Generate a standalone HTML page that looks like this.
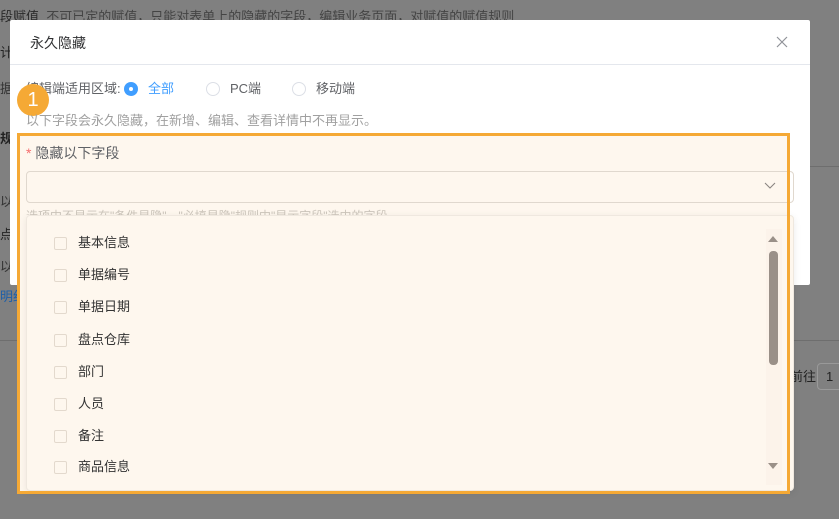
<!DOCTYPE html>
<html><head><meta charset="utf-8"><style>
*{margin:0;padding:0;box-sizing:border-box}
body{width:839px;height:519px;overflow:hidden;background:#808080;position:relative;font-family:"Liberation Sans","Noto Sans CJK SC",sans-serif;font-size:13px;color:#333;line-height:18px}
.a{position:absolute;white-space:nowrap}
.cb{position:absolute;left:0;width:13px;height:13px;border:1px solid #e3d9cd;border-radius:2px}
.lb{position:absolute;left:24px;line-height:18px}
</style></head><body>
<div class="a" style="left:0;top:8px;font-size:13px;color:#2a2a2a;">段赋值&nbsp;&nbsp;<span style="color:#444">不可已定的赋值，只能对表单上的隐藏的字段，编辑业务页面，对赋值的赋值规则</span></div>
<div class="a" style="left:0;top:44px;color:#222">计</div>
<div class="a" style="left:0;top:80px;color:#333">据</div>
<div class="a" style="left:0;top:130px;color:#222;font-weight:bold">规</div>
<div class="a" style="left:0;top:193px;color:#333">以</div>
<div class="a" style="left:0;top:226px;color:#222">点</div>
<div class="a" style="left:0;top:258px;color:#333">以</div>
<div class="a" style="left:0;top:288px;color:#1f5fa8">明细</div>
<div class="a" style="left:0;top:340px;width:839px;height:1px;background:#6e6e6e"></div>
<div class="a" style="left:810px;top:166px;width:29px;height:1px;background:#6e6e6e"></div>
<div class="a" style="left:790px;top:368px;color:#222">前往</div>
<div class="a" style="left:817px;top:363px;width:30px;height:27px;border:1px solid #999;border-radius:4px;background:#808080;color:#222;padding:4px 0 0 8px">1</div>

<div class="a" style="left:10px;top:20px;width:800px;height:265px;background:#fff;border-radius:2px"></div>
<div class="a" style="left:10px;top:64px;width:800px;height:1px;background:#e4e7ed"></div>
<div class="a" style="left:30px;top:34px;font-size:14px;color:#303133">永久隐藏</div>
<svg class="a" style="left:776px;top:36px" width="12" height="12"><path d="M1 1L11 11M11 1L1 11" stroke="#909399" stroke-width="1.2"/></svg>

<div class="a" style="left:26px;top:80px;color:#606266">编辑端适用区域:</div>
<div class="a" style="left:124px;top:82px;width:14px;height:14px;border-radius:50%;background:#409eff"></div>
<div class="a" style="left:129px;top:87px;width:4px;height:4px;border-radius:50%;background:#fff"></div>
<div class="a" style="left:148px;top:80px;color:#409eff">全部</div>
<div class="a" style="left:206px;top:82px;width:14px;height:14px;border-radius:50%;border:1px solid #dcdfe6"></div>
<div class="a" style="left:230px;top:80px;color:#606266">PC端</div>
<div class="a" style="left:292px;top:82px;width:14px;height:14px;border-radius:50%;border:1px solid #dcdfe6"></div>
<div class="a" style="left:316px;top:80px;color:#606266">移动端</div>
<div class="a" style="left:17px;top:84px;width:32px;height:32px;border-radius:50%;background:#f5a935;color:#fff;font-size:20px;text-align:center;line-height:32px">1</div>
<div class="a" style="left:26px;top:112px;color:#a0a0a0">以下字段会永久隐藏，在新增、编辑、查看详情中不再显示。</div>

<div class="a" style="left:17px;top:133px;width:773px;height:361px;background:#fef7ee"></div>
<div class="a" style="left:26px;top:144px;font-size:14px;color:#606266"><span style="color:#f56c6c">*</span> 隐藏以下字段</div>
<div class="a" style="left:26px;top:171px;width:768px;height:32px;border:1px solid #e0d8ce;border-radius:4px"></div>
<svg class="a" style="left:764px;top:182px" width="12" height="8"><path d="M1 1L6 6L11 1" stroke="#8a8580" stroke-width="1.1" fill="none"/></svg>
<div class="a" style="left:26px;top:207px;color:#ccc5bb;font-size:12px;height:8px;overflow:hidden">选项中不显示在"条件显隐"、"必填显隐"规则中"显示字段"选中的字段</div>
<div class="a" style="left:26px;top:215px;width:768px;height:276px;background:#fef7ee;border:1px solid #efe8df;border-radius:4px;box-shadow:0 2px 8px rgba(0,0,0,.08)"></div>
<div class="a" style="left:766px;top:229px;width:16px;height:256px;background:#fcf3ea"></div>
<svg class="a" style="left:767px;top:234px" width="12" height="10"><path d="M1 8L6 2L11 8Z" fill="#9a9088"/></svg>
<div class="a" style="left:769px;top:251px;width:9px;height:114px;border-radius:4px;background:#9a9088"></div>
<svg class="a" style="left:767px;top:461px" width="12" height="10"><path d="M1 2L6 8L11 2Z" fill="#9a9088"/></svg>

<div class="a" style="left:54px;top:234px">
<div style="position:relative">
<div class="cb" style="top:3px"></div><div class="lb" style="top:0">基本信息</div>
<div class="cb" style="top:35px"></div><div class="lb" style="top:32px">单据编号</div>
<div class="cb" style="top:67px"></div><div class="lb" style="top:64px">单据日期</div>
<div class="cb" style="top:100px"></div><div class="lb" style="top:97px">盘点仓库</div>
<div class="cb" style="top:132px"></div><div class="lb" style="top:129px">部门</div>
<div class="cb" style="top:164px"></div><div class="lb" style="top:161px">人员</div>
<div class="cb" style="top:196px"></div><div class="lb" style="top:193px">备注</div>
<div class="cb" style="top:227px"></div><div class="lb" style="top:224px">商品信息</div>
</div></div>
<div class="a" style="left:17px;top:133px;width:773px;height:361px;border:3px solid #f5a935"></div>
</body></html>
